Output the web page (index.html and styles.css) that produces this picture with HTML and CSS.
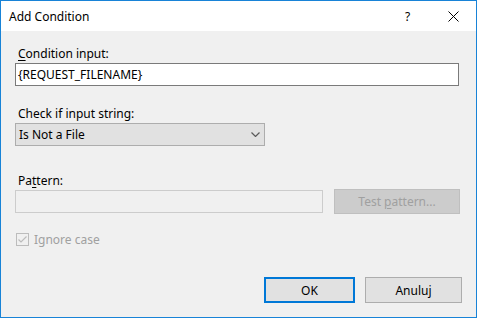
FILE: index.html
```html
<!DOCTYPE html>
<html>
<head>
<meta charset="utf-8">
<link rel="stylesheet" href="styles.css">
</head>
<body>
<div class="window">
  <div class="titlebar">
    <span class="title">Add Condition</span>
    <span class="help">?</span>
    <span class="close">
      <svg width="11" height="11" viewBox="0 0 11 11"><path d="M0.5 0.5 L10.5 10.5 M10.5 0.5 L0.5 10.5" stroke="#000" stroke-width="1" fill="none"/></svg>
    </span>
  </div>
  <div class="content">
    <div class="label l1"><u>C</u>ondition input:</div>
    <div class="textbox">{REQUEST_FILENAME}</div>
    <div class="label l2">Check if input string:</div>
    <div class="select">
      <span>Is Not a File</span>
      <svg class="chev" width="9" height="5" viewBox="0 0 9 5"><path d="M0.5 0.5 L4.5 4.5 L8.5 0.5" stroke="#5a5a5a" stroke-width="1.2" fill="none"/></svg>
    </div>
    <div class="label l3">Pa<u>t</u>tern:</div>
    <div class="pattern-row">
      <div class="textbox disabled"></div>
      <div class="btn test"><span>Test <u>p</u>attern...</span></div>
    </div>
    <div class="check-row">
      <span class="checkbox">
        <svg width="11" height="11" viewBox="0 0 11 11"><path d="M1.5 5.5 L4 8 L9.5 2.5" stroke="#bcbcbc" stroke-width="1.2" fill="none"/></svg>
      </span>
      <span class="check-label">Ignore case</span>
    </div>
    <div class="buttons">
      <div class="btn ok">OK</div>
      <div class="btn cancel">Anuluj</div>
    </div>
  </div>
</div>
</body>
</html>
```

FILE: styles.css
```css
* { box-sizing: border-box; }
html, body { margin: 0; padding: 0; background: #f0f0f0; }
body { font-family: "Noto Sans", "Open Sans", sans-serif; font-size: 12px; color: #000; }
.window {
  width: 477px; height: 318px;
  border: 1px solid #1883d7;
  display: flex; flex-direction: column;
  background: #f0f0f0;
}
.titlebar {
  height: 30px; background: #fff;
  display: flex; align-items: center;
  flex: none;
}
.title { padding-left: 8px; font-size: 12px; flex: 1; }
.help { width: 6px; margin-right: 37px; font-size: 12px; }
.close { width: 11px; height: 11px; margin-right: 17px; display: flex; }
.close svg { display: block; }
.content {
  flex: 1;
  padding: 15px 0 0 14px;
  display: flex; flex-direction: column;
}
.label { height: 16px; line-height: 16px; padding-left: 3px; }
.label u { text-decoration-thickness: 1px; text-underline-offset: 2px; }
.l1 { margin-bottom: 1px; }
.l2 { margin-top: 20px; margin-bottom: 1px; }
.l3 { margin-top: 27px; margin-bottom: 0; }
.textbox {
  width: 444px; height: 23px;
  border: 1px solid #7a7a7a; background: #fff;
  line-height: 21px; padding-left: 2px;
}
.textbox.disabled {
  width: 308px; border-color: #cccccc; background: #f0f0f0;
  margin-top: 1px;
}
.select {
  width: 250px; height: 23px;
  border: 1px solid #adadad; background: #e1e1e1;
  display: flex; align-items: center; justify-content: space-between;
  padding: 0 4px 0 3px;
}
.chev { display: block; }
.pattern-row { display: flex; align-items: flex-start; gap: 11px; }
.btn {
  display: flex; align-items: center; justify-content: center;
  background: #e1e1e1; border: 1px solid #adadad;
}
.btn u { text-decoration-thickness: 1px; text-underline-offset: 2px; }
.test {
  width: 126px; height: 25px;
  background: #cccccc; border-color: #bfbfbf; color: #a0a0a0;
}
.check-row { display: flex; align-items: center; margin-top: 19px; height: 13px; padding-left: 1px; }
.checkbox {
  width: 13px; height: 13px; border: 1px solid #bcbcbc; background: #f0f0f0;
  display: flex; align-items: center; justify-content: center;
}
.checkbox svg { display: block; }
.check-label { color: #a0a0a0; margin-left: 5px; line-height: 13px; }
.buttons {
  display: flex; justify-content: flex-end; gap: 10px;
  margin-top: 31px; padding-right: 14px;
}
.ok { width: 91px; height: 26px; border: 2px solid #0078d7; }
.cancel { width: 97px; height: 26px; }
```
